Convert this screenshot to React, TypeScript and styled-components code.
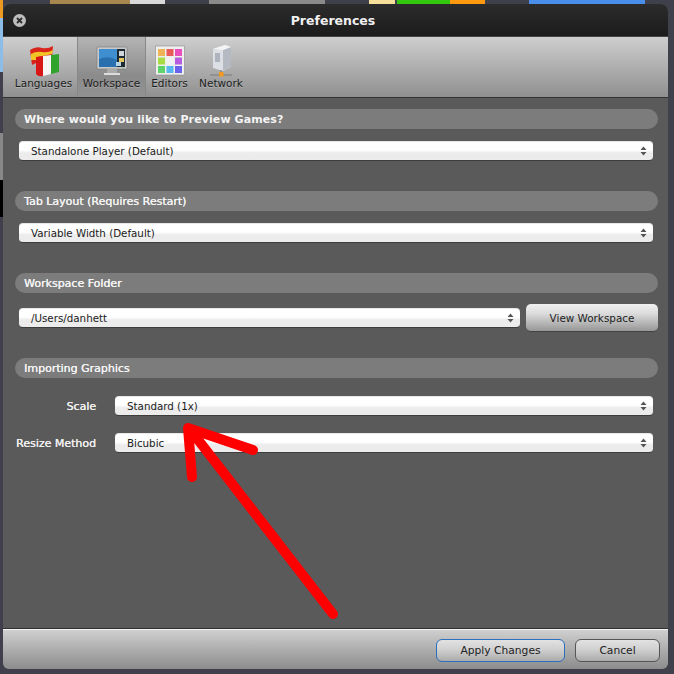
import React from "react";
import styled, { createGlobalStyle } from "styled-components";

const Global = createGlobalStyle`
  html, body { margin: 0; padding: 0; width: 674px; height: 674px; overflow: hidden; background: #40404d; }
  * { box-sizing: border-box; }
`;
const Page = styled.div`
  position: relative; width: 674px; height: 674px; padding: 4px 6px 5px 3px;
  font-family: "DejaVu Sans", "Liberation Sans", sans-serif;
`;
const Peek = styled.div<{ $x: number; $w: number; $bg: string }>`
  position: absolute; top: 0; height: 4px; left: ${p => p.$x}px; width: ${p => p.$w}px; background: ${p => p.$bg};
`;
const SidePeek = styled.div<{ $y: number; $h: number; $bg: string }>`
  position: absolute; left: 0; width: 3px; top: ${p => p.$y}px; height: ${p => p.$h}px; background: ${p => p.$bg};
`;
const Win = styled.div`
  position: relative; width: 665px; height: 665px; display: flex; flex-direction: column;
  border-radius: 7px 7px 6px 6px; overflow: hidden; background: #5a5a5a;
`;
const TitleBar = styled.div`
  position: relative; flex: 0 0 33px; display: flex; align-items: center; justify-content: center;
  background: linear-gradient(#2c2c2c, #1c1c1c); border-bottom: 1px solid #444;
  color: #f0f0f0; font-size: 12.5px; font-weight: bold; padding-right: 5px; padding-top: 1px;
`;
const Close = styled.div`
  position: absolute; left: 10px; top: 10px; width: 13px; height: 13px; border-radius: 50%; background: #bdbdbd;
  display: flex; align-items: center; justify-content: center;
`;
const Toolbar = styled.div`
  flex: 0 0 61px; display: flex; padding-left: 7px;
  background: linear-gradient(#cecece, #909090); border-bottom: 1px solid #333;
`;
const Tool = styled.div<{ $active?: boolean; $w: number }>`
  width: ${p => p.$w}px; height: 60px; display: flex; flex-direction: column; align-items: center;
  padding-top: 8px; font-size: 10.5px; color: #1c1c1c; white-space: nowrap; text-shadow: 0 1px rgba(255,255,255,.25);
  ${p => p.$active ? "background: linear-gradient(#b4b4b4, #8b8b8b 65%, #929292); border-left: 1px solid #888; border-right: 1px solid #888;" : ""}
`;
const ToolIcon = styled.svg` width: 32px; height: 32px; flex: none; margin-bottom: 0; `;
const Content = styled.div`
  flex: 1; display: flex; flex-direction: column; padding: 11px 10px 0 12px; background: #5a5a5a;
`;
const Section = styled.div<{ $top?: number; $wide?: boolean }>`
  height: 20px; flex: none; margin-top: ${p => p.$top ?? 0}px; border-radius: 10px; background: #7c7c7c; color: #f4f4f4;
  font-size: 11px; font-weight: ${p => p.$wide ? "bold" : "normal"}; display: flex; align-items: center; padding-left: 9px;
  letter-spacing: ${p => p.$wide ? "0.1px" : "0"};
  text-shadow: ${p => p.$wide ? "none" : "0.3px 0 currentColor"};
`;
const Row = styled.div<{ $top: number }>`
  display: flex; align-items: center; flex: none; margin-top: ${p => p.$top}px;
`;
const Label = styled.div`
  width: 81px; flex: none; margin-right: 19px; display: flex; justify-content: flex-end; color: #f0f0f0;
  font-size: 11px; white-space: nowrap; text-shadow: 0.3px 0 currentColor;
`;
const Select = styled.div<{ $inset?: boolean }>`
  position: relative; flex: 1; height: 20px; margin-left: ${p => p.$inset ? 4 : 0}px; margin-right: 5px;
  border-radius: 4px; background: linear-gradient(#fff 0%, #fff 45%, #ececec 60%, #ececec 100%);
  border-top: 1px solid #e8e8e8; border-bottom: 1px solid #3d3d3d;
  color: #1a1a1a; font-size: 10.3px; display: flex; align-items: center; padding-left: 12px; line-height: 1;
`;
const Arrows = styled.svg` position: absolute; right: 6px; top: 4px; width: 7px; height: 10px; `;
const ViewBtn = styled.div`
  width: 132px; flex: none; height: 28px; border-radius: 5px; margin-left: 1px;
  background: linear-gradient(#f0f0f0, #dcdcdc 35%, #979797); border-bottom: 1px solid #444;
  color: #222; font-size: 10.4px; display: flex; align-items: center; justify-content: center;
`;
const Footer = styled.div`
  flex: 0 0 40px; display: flex; align-items: flex-start; justify-content: flex-end; gap: 10px; padding: 9px 8px 0 0;
  background: linear-gradient(#cfcfcf, #8c8c8c); border-top: 1px solid #f4f4f4; box-shadow: 0 -1px #2f2f2f;
`;
const FootBtn = styled.div<{ $w: number; $primary?: boolean }>`
  width: ${p => p.$w}px; height: 23px; border-radius: 6px; font-size: 10.7px; color: #222;
  display: flex; align-items: center; justify-content: center;
  border: 1px solid ${p => p.$primary ? "#2a6fc0" : "#555"};
  background: linear-gradient(#e2e2e2, #d0d0d0 45%, #ababab);
`;
const Arrow = styled.svg` position: absolute; left: 0; top: 0; width: 674px; height: 674px; pointer-events: none; `;

const ArrowsIcon = () => (
  <Arrows viewBox="0 0 7 10"><path d="M3.5 0.5 L6.5 4 H0.5Z M0.5 6 H6.5 L3.5 9.5Z" fill="#555" /></Arrows>
);

export default function App() {
  return (
    <Page>
      <Global />
      <Peek $x={50} $w={80} $bg="#a8874e" />
      <Peek $x={130} $w={35} $bg="#d8d8d8" />
      <Peek $x={209} $w={116} $bg="#8a8a8a" />
      <Peek $x={369} $w={26} $bg="#f5df9a" />
      <Peek $x={397} $w={53} $bg="#33c80d" />
      <Peek $x={450} $w={35} $bg="#ff9a10" />
      <Peek $x={529} $w={116} $bg="#4a8eec" />
      <SidePeek $y={0} $h={18} $bg="#ee9a22" />
      <SidePeek $y={18} $h={54} $bg="#8cbce8" />
      <SidePeek $y={133} $h={47} $bg="#888888" />
      <SidePeek $y={180} $h={37} $bg="#000000" />
      <Win>
        <TitleBar>
          <Close>
            <svg width="7" height="7" viewBox="0 0 7 7"><path d="M1 1 L6 6 M6 1 L1 6" stroke="#2b2b2b" strokeWidth="1.8" /></svg>
          </Close>
          Preferences
        </TitleBar>
        <Toolbar>
          <Tool $w={67}>
            <ToolIcon viewBox="0 0 32 32">
              <path d="M2 5 Q8 1 14 3 Q20 4 25 1 L24 11 L12 14 L8 18 L4 20Z" fill="#d9231b" />
              <path d="M3 9 Q8 6 14 7 Q20 8 25 5 L24 9 L10 12 L8 15 L3 15Z" fill="#f2c526" />
              <path d="M8 12 L15 11 L15 31 Q10 32 8 29Z" fill="#d81616" />
              <path d="M15 11 L23 10 L23 29 L15 31Z" fill="#f5f5f5" />
              <path d="M23 10 L31 9 L31 27 L23 29Z" fill="#2fa32b" />
            </ToolIcon>
            Languages
          </Tool>
          <Tool $w={69} $active>
            <ToolIcon viewBox="0 0 32 32">
              <rect x="1" y="2" width="30" height="22" rx="1" fill="#c9c9c9" stroke="#777" strokeWidth="0.6" />
              <rect x="3" y="4" width="26" height="18" fill="#1d2a33" />
              <path d="M3 4 H21 V22 H3Z" fill="#3f8fd0" />
              <path d="M3 14 Q12 10 21 15 V22 H3Z" fill="#2a6fae" />
              <rect x="23" y="6" width="5" height="5" fill="#cfd6dc" />
              <rect x="23" y="13" width="5" height="4" fill="#e5c95e" />
              <rect x="20" y="17" width="5" height="4" fill="#b7d3e6" />
              <rect x="11" y="24" width="10" height="4" fill="#aaa" />
              <rect x="8" y="28" width="16" height="2" fill="#ddd" />
              <circle cx="27" cy="23" r="0.6" fill="#35c935" />
            </ToolIcon>
            Workspace
          </Tool>
          <Tool $w={47}>
            <ToolIcon viewBox="0 0 32 32">
              <rect x="1.5" y="1" width="29" height="29" fill="#efefef" stroke="#8a8a8a" strokeWidth="0.6" />
              <rect x="4" y="4" width="7" height="7" fill="#eeb355" />
              <rect x="12.5" y="4" width="7" height="7" fill="#e95a5a" />
              <rect x="21" y="4" width="7" height="7" fill="#e84fbd" />
              <rect x="4" y="12.5" width="7" height="7" fill="#a8dc45" />
              <rect x="12.5" y="12.5" width="7" height="7" fill="#f2f2f2" />
              <rect x="21" y="12.5" width="7" height="7" fill="#b65ce0" />
              <rect x="4" y="21" width="7" height="7" fill="#5fd36a" />
              <rect x="12.5" y="21" width="7" height="7" fill="#55b8ef" />
              <rect x="21" y="21" width="7" height="7" fill="#6a63ee" />
            </ToolIcon>
            Editors
          </Tool>
          <Tool $w={56}>
            <ToolIcon viewBox="0 0 32 32">
              <path d="M8 4 L20 0 L26 2 L26 22 L18 26 L8 23Z" fill="#dcdfe4" />
              <path d="M18 5 L26 2 L26 22 L18 26Z" fill="#b4b9c2" />
              <path d="M8 4 L20 0 L26 2 L18 5Z" fill="#f4f4f4" />
              <rect x="10" y="8" width="5" height="9" fill="#aeb4bd" />
              <path d="M16 25 V29 M5 30 H27" stroke="#7d7d7d" strokeWidth="1.2" />
              <rect x="14" y="27" width="4.5" height="4.5" fill="#f09a20" />
            </ToolIcon>
            Network
          </Tool>
        </Toolbar>
        <Content>
          <Section $wide>Where would you like to Preview Games?</Section>
          <Row $top={12}><Select $inset>Standalone Player (Default)<ArrowsIcon /></Select></Row>
          <Section $top={30}>Tab Layout (Requires Restart)</Section>
          <Row $top={12}><Select $inset>Variable Width (Default)<ArrowsIcon /></Select></Row>
          <Section $top={30}>Workspace Folder</Section>
          <Row $top={11}>
            <Select $inset>/Users/danhett<ArrowsIcon /></Select>
            <ViewBtn>View Workspace</ViewBtn>
          </Row>
          <Section $top={26}>Importing Graphics</Section>
          <Row $top={18}><Label>Scale</Label><Select>Standard (1x)<ArrowsIcon /></Select></Row>
          <Row $top={17}><Label>Resize Method</Label><Select>Bicubic<ArrowsIcon /></Select></Row>
        </Content>
        <Footer>
          <FootBtn $w={129} $primary>Apply Changes</FootBtn>
          <FootBtn $w={85}>Cancel</FootBtn>
        </Footer>
      </Win>
      <Arrow viewBox="0 0 674 674">
        <path d="M333 614 L192 432 M192 477 L188 428 L253 450" fill="none" stroke="#fe0000" strokeWidth="10" strokeLinecap="round" strokeLinejoin="round" />
      </Arrow>
    </Page>
  );
}
